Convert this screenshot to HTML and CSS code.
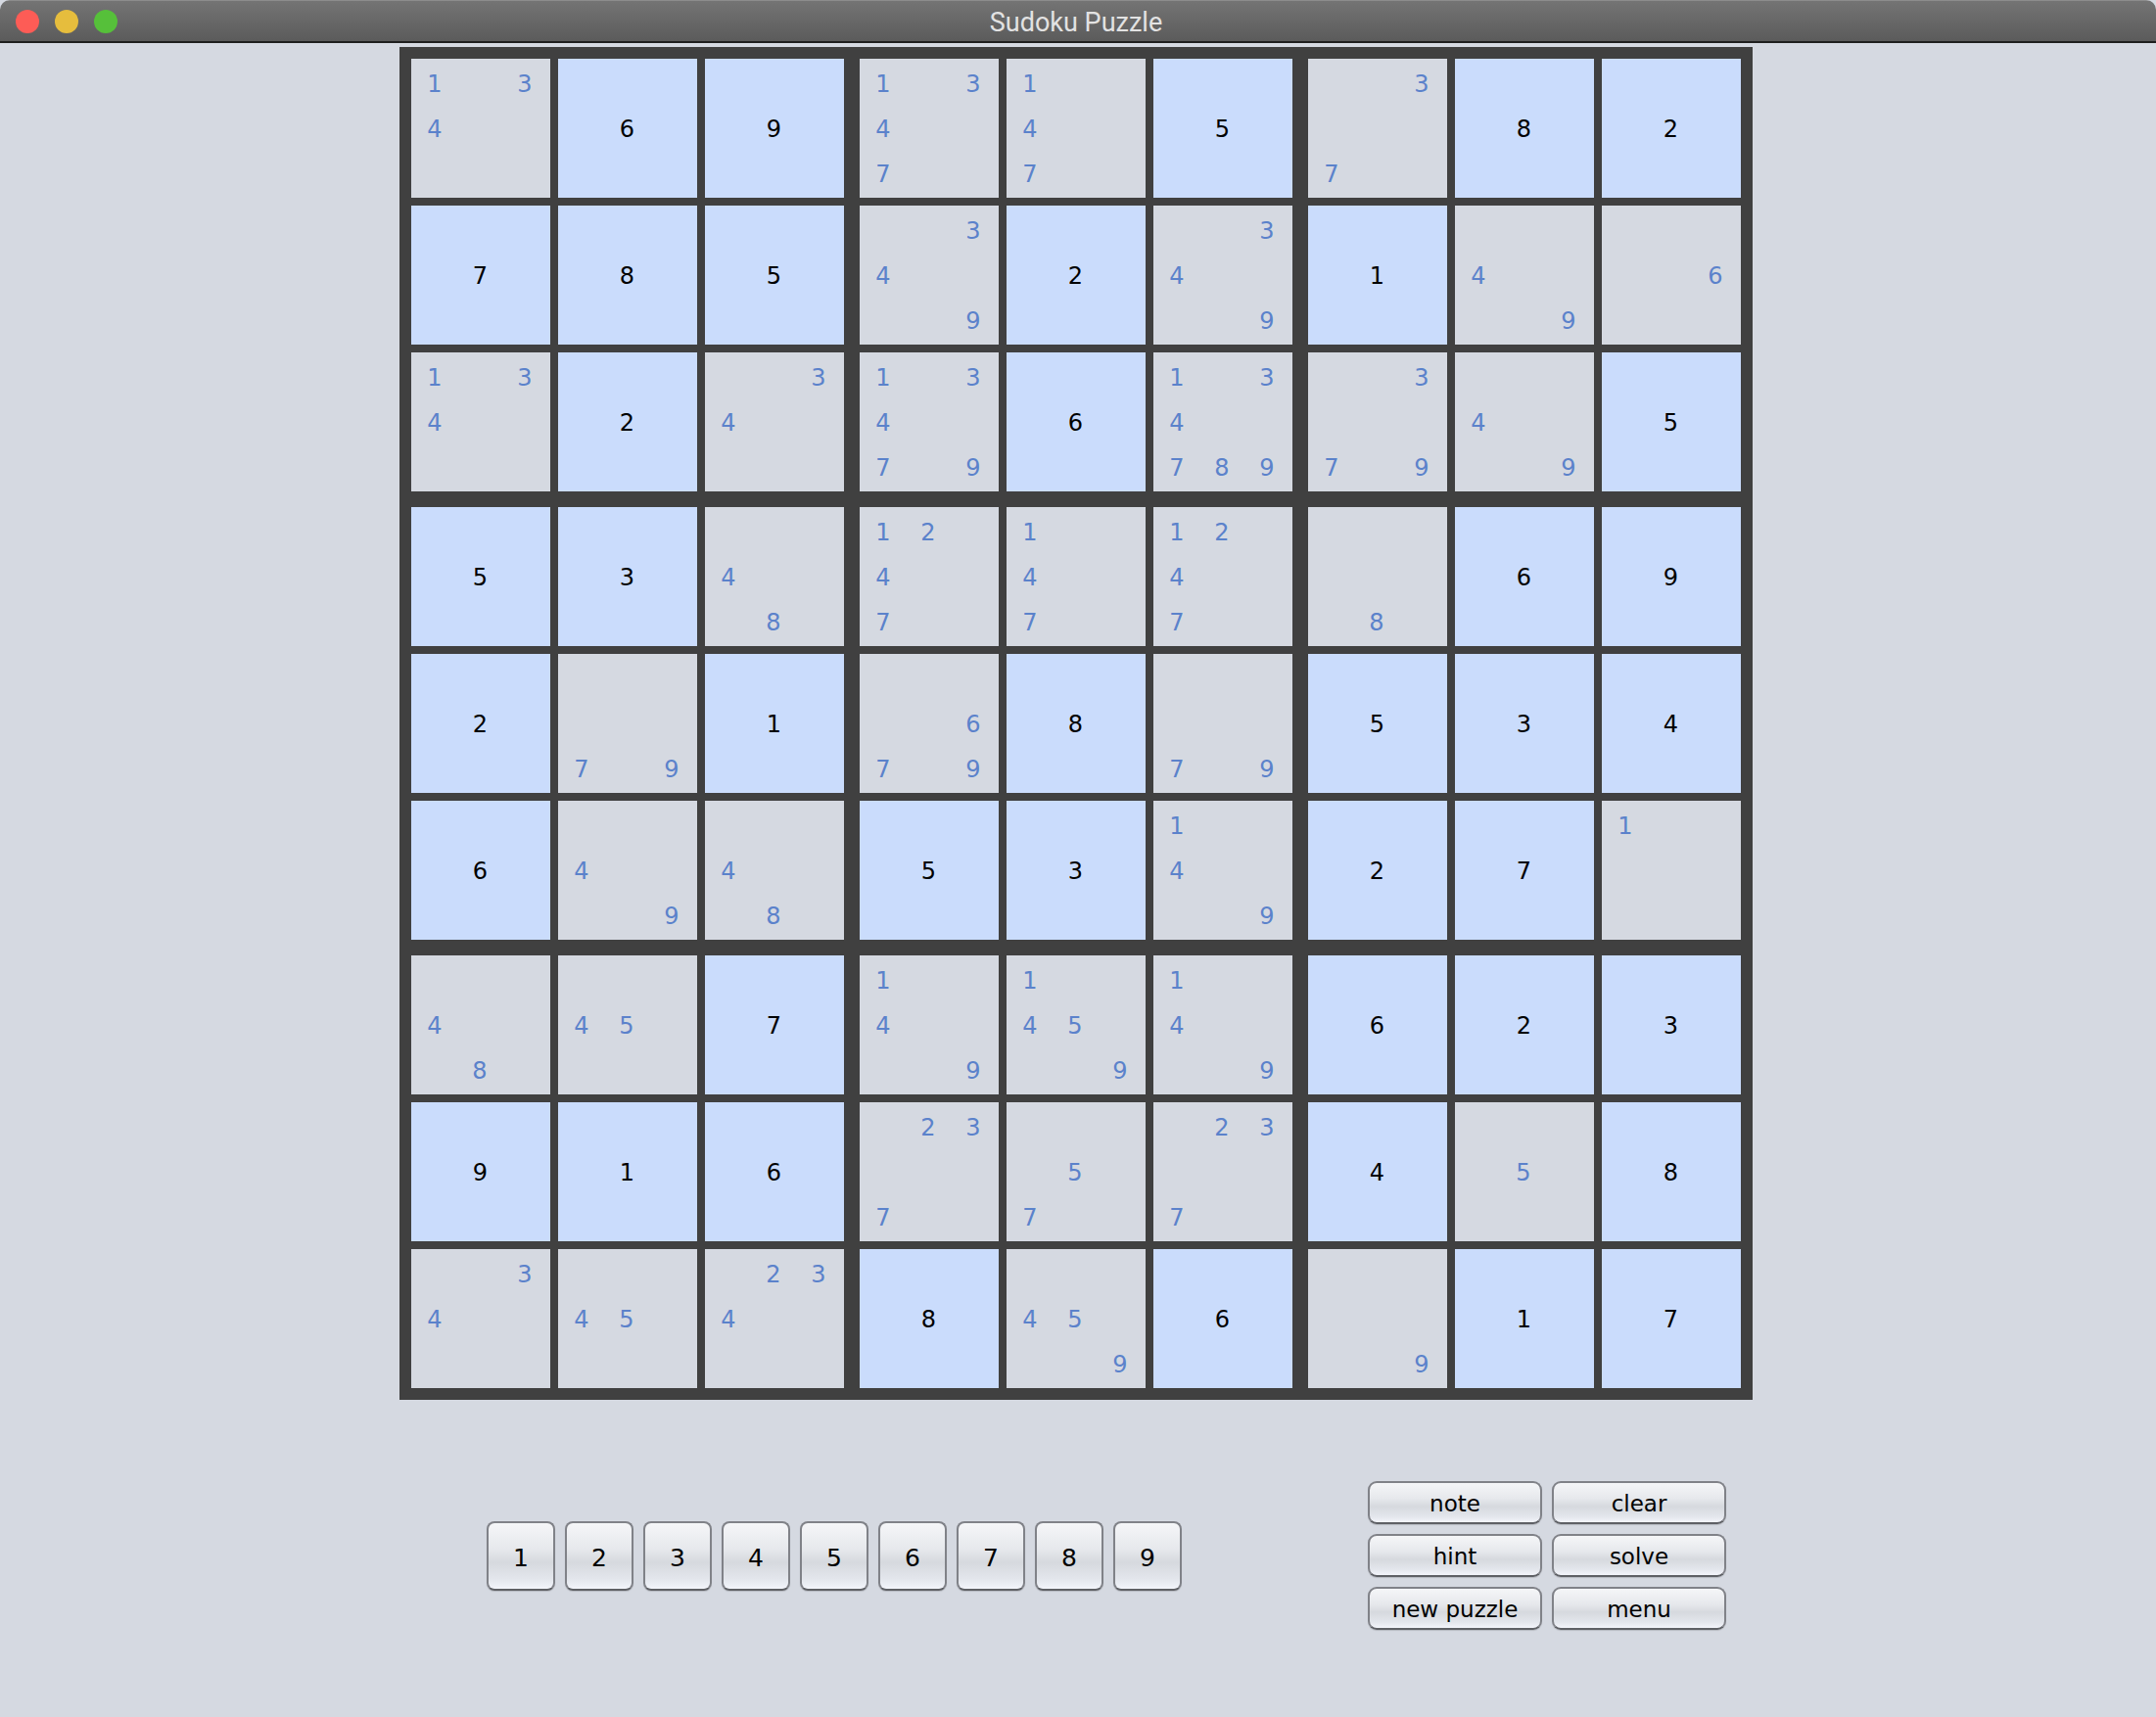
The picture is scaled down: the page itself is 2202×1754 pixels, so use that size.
FILE: index.html
```html
<!DOCTYPE html>
<html lang="en">
<head>
<meta charset="utf-8">
<title>Sudoku Puzzle</title>
<link rel="stylesheet" href="styles.css">
</head>
<body>
<div class="window">
  <header class="titlebar">
    <div class="lights">
      <span class="light red"></span>
      <span class="light yellow"></span>
      <span class="light green"></span>
    </div>
    <div class="title">Sudoku Puzzle</div>
    <div></div>
  </header>

  <main class="content">
    <div class="board">
      <!-- box 1 -->
      <div class="box">
        <div class="cell notes"><span class="n1">1</span><span class="n3">3</span><span class="n4">4</span></div>
        <div class="cell given">6</div>
        <div class="cell given">9</div>
        <div class="cell given">7</div>
        <div class="cell given">8</div>
        <div class="cell given">5</div>
        <div class="cell notes"><span class="n1">1</span><span class="n3">3</span><span class="n4">4</span></div>
        <div class="cell given">2</div>
        <div class="cell notes"><span class="n3">3</span><span class="n4">4</span></div>
      </div>
      <!-- box 2 -->
      <div class="box">
        <div class="cell notes"><span class="n1">1</span><span class="n3">3</span><span class="n4">4</span><span class="n7">7</span></div>
        <div class="cell notes"><span class="n1">1</span><span class="n4">4</span><span class="n7">7</span></div>
        <div class="cell given">5</div>
        <div class="cell notes"><span class="n3">3</span><span class="n4">4</span><span class="n9">9</span></div>
        <div class="cell given">2</div>
        <div class="cell notes"><span class="n3">3</span><span class="n4">4</span><span class="n9">9</span></div>
        <div class="cell notes"><span class="n1">1</span><span class="n3">3</span><span class="n4">4</span><span class="n7">7</span><span class="n9">9</span></div>
        <div class="cell given">6</div>
        <div class="cell notes"><span class="n1">1</span><span class="n3">3</span><span class="n4">4</span><span class="n7">7</span><span class="n8">8</span><span class="n9">9</span></div>
      </div>
      <!-- box 3 -->
      <div class="box">
        <div class="cell notes"><span class="n3">3</span><span class="n7">7</span></div>
        <div class="cell given">8</div>
        <div class="cell given">2</div>
        <div class="cell given">1</div>
        <div class="cell notes"><span class="n4">4</span><span class="n9">9</span></div>
        <div class="cell notes"><span class="n6">6</span></div>
        <div class="cell notes"><span class="n3">3</span><span class="n7">7</span><span class="n9">9</span></div>
        <div class="cell notes"><span class="n4">4</span><span class="n9">9</span></div>
        <div class="cell given">5</div>
      </div>
      <!-- box 4 -->
      <div class="box">
        <div class="cell given">5</div>
        <div class="cell given">3</div>
        <div class="cell notes"><span class="n4">4</span><span class="n8">8</span></div>
        <div class="cell given">2</div>
        <div class="cell notes"><span class="n7">7</span><span class="n9">9</span></div>
        <div class="cell given">1</div>
        <div class="cell given">6</div>
        <div class="cell notes"><span class="n4">4</span><span class="n9">9</span></div>
        <div class="cell notes"><span class="n4">4</span><span class="n8">8</span></div>
      </div>
      <!-- box 5 -->
      <div class="box">
        <div class="cell notes"><span class="n1">1</span><span class="n2">2</span><span class="n4">4</span><span class="n7">7</span></div>
        <div class="cell notes"><span class="n1">1</span><span class="n4">4</span><span class="n7">7</span></div>
        <div class="cell notes"><span class="n1">1</span><span class="n2">2</span><span class="n4">4</span><span class="n7">7</span></div>
        <div class="cell notes"><span class="n6">6</span><span class="n7">7</span><span class="n9">9</span></div>
        <div class="cell given">8</div>
        <div class="cell notes"><span class="n7">7</span><span class="n9">9</span></div>
        <div class="cell given">5</div>
        <div class="cell given">3</div>
        <div class="cell notes"><span class="n1">1</span><span class="n4">4</span><span class="n9">9</span></div>
      </div>
      <!-- box 6 -->
      <div class="box">
        <div class="cell notes"><span class="n8">8</span></div>
        <div class="cell given">6</div>
        <div class="cell given">9</div>
        <div class="cell given">5</div>
        <div class="cell given">3</div>
        <div class="cell given">4</div>
        <div class="cell given">2</div>
        <div class="cell given">7</div>
        <div class="cell notes"><span class="n1">1</span></div>
      </div>
      <!-- box 7 -->
      <div class="box">
        <div class="cell notes"><span class="n4">4</span><span class="n8">8</span></div>
        <div class="cell notes"><span class="n4">4</span><span class="n5">5</span></div>
        <div class="cell given">7</div>
        <div class="cell given">9</div>
        <div class="cell given">1</div>
        <div class="cell given">6</div>
        <div class="cell notes"><span class="n3">3</span><span class="n4">4</span></div>
        <div class="cell notes"><span class="n4">4</span><span class="n5">5</span></div>
        <div class="cell notes"><span class="n2">2</span><span class="n3">3</span><span class="n4">4</span></div>
      </div>
      <!-- box 8 -->
      <div class="box">
        <div class="cell notes"><span class="n1">1</span><span class="n4">4</span><span class="n9">9</span></div>
        <div class="cell notes"><span class="n1">1</span><span class="n4">4</span><span class="n5">5</span><span class="n9">9</span></div>
        <div class="cell notes"><span class="n1">1</span><span class="n4">4</span><span class="n9">9</span></div>
        <div class="cell notes"><span class="n2">2</span><span class="n3">3</span><span class="n7">7</span></div>
        <div class="cell notes"><span class="n5">5</span><span class="n7">7</span></div>
        <div class="cell notes"><span class="n2">2</span><span class="n3">3</span><span class="n7">7</span></div>
        <div class="cell given">8</div>
        <div class="cell notes"><span class="n4">4</span><span class="n5">5</span><span class="n9">9</span></div>
        <div class="cell given">6</div>
      </div>
      <!-- box 9 -->
      <div class="box">
        <div class="cell given">6</div>
        <div class="cell given">2</div>
        <div class="cell given">3</div>
        <div class="cell given">4</div>
        <div class="cell notes"><span class="n5">5</span></div>
        <div class="cell given">8</div>
        <div class="cell notes"><span class="n9">9</span></div>
        <div class="cell given">1</div>
        <div class="cell given">7</div>
      </div>
    </div>

    <div class="controls">
      <div class="numpad">
        <button class="btn num">1</button>
        <button class="btn num">2</button>
        <button class="btn num">3</button>
        <button class="btn num">4</button>
        <button class="btn num">5</button>
        <button class="btn num">6</button>
        <button class="btn num">7</button>
        <button class="btn num">8</button>
        <button class="btn num">9</button>
      </div>
      <div class="actions">
        <button class="btn action">note</button>
        <button class="btn action">clear</button>
        <button class="btn action">hint</button>
        <button class="btn action">solve</button>
        <button class="btn action">new puzzle</button>
        <button class="btn action">menu</button>
      </div>
    </div>
  </main>
</div>
</body>
</html>
```

FILE: styles.css
```css
* { box-sizing: border-box; }

html, body {
  margin: 0;
  padding: 0;
  width: 2202px;
  height: 1754px;
  overflow: hidden;
  background: #d5d9e1;
}

.window {
  width: 2202px;
  height: 1754px;
  display: flex;
  flex-direction: column;
  background: #d5d9e1;
  border-radius: 10px 10px 0 0;
  overflow: hidden;
}

.titlebar {
  height: 44px;
  flex: none;
  display: grid;
  grid-template-columns: 1fr auto 1fr;
  align-items: center;
  background: linear-gradient(#747474, #5b5b5b);
  border-top: 1px solid #8c8c8c;
  border-bottom: 2px solid #1f1f1f;
}

.lights {
  display: flex;
  gap: 16px;
  padding-left: 16px;
}

.light {
  width: 24px;
  height: 24px;
  border-radius: 50%;
}
.light.red { background: #fd5c56; }
.light.yellow { background: #e6bd3d; }
.light.green { background: #56c03a; }

.title {
  font-family: Roboto, "Liberation Sans", sans-serif;
  font-size: 27px;
  color: #e2e2e2;
  margin-right: 4px;
  padding-top: 3px;
}

.content {
  flex: 1;
  padding-top: 4px;
}

.board {
  margin-left: 408px;
  width: 1382px;
  background: #404040;
  padding: 12px;
  display: grid;
  grid-template-columns: repeat(3, 442px);
  grid-auto-rows: 442px;
  gap: 16px;
}

.box {
  display: grid;
  grid-template-columns: repeat(3, 142px);
  grid-auto-rows: 142px;
  gap: 8px;
}

.cell {
  font-family: "DejaVu Sans", "Liberation Sans", sans-serif;
  font-size: 24px;
}

.given {
  background: #cadcfc;
  color: #000;
  display: flex;
  align-items: center;
  justify-content: center;
  padding: 2px 1px 0 0;
}

.notes {
  background: #d5d9e1;
  color: #5b82cb;
  display: grid;
  grid-template-columns: repeat(3, 46px);
  grid-template-rows: repeat(3, 46px);
  padding: 3px 0 0 1px;
}

.notes span {
  display: flex;
  align-items: center;
  justify-content: center;
}

.n1 { grid-area: 1 / 1; }
.n2 { grid-area: 1 / 2; }
.n3 { grid-area: 1 / 3; }
.n4 { grid-area: 2 / 1; }
.n5 { grid-area: 2 / 2; }
.n6 { grid-area: 2 / 3; }
.n7 { grid-area: 3 / 1; }
.n8 { grid-area: 3 / 2; }
.n9 { grid-area: 3 / 3; }

.controls {
  display: flex;
  align-items: center;
  margin-top: 83px;
  height: 152px;
  padding-left: 497px;
}

.numpad {
  display: flex;
  gap: 10px;
}

.actions {
  margin-left: 190px;
  display: grid;
  grid-template-columns: repeat(2, 178px);
  grid-auto-rows: 44px;
  column-gap: 10px;
  row-gap: 10px;
}

.btn {
  font-family: "DejaVu Sans", "Liberation Sans", sans-serif;
  color: #000;
  border: 2px solid #808288;
  border-bottom-color: #5e6065;
  background: linear-gradient(#f5f6f8 0%, #e6e8ec 40%, #d6d9de 60%, #e3e6ec 85%, #f3f5fb 100%);
  box-shadow: 0 1px 1px rgba(0, 0, 0, 0.15);
}

.num {
  width: 70px;
  height: 71px;
  border-radius: 8px;
  font-size: 25px;
  padding: 4px 0 0;
}

.action {
  border-radius: 9px;
  font-size: 23px;
  padding: 2px 0 0;
}
```
